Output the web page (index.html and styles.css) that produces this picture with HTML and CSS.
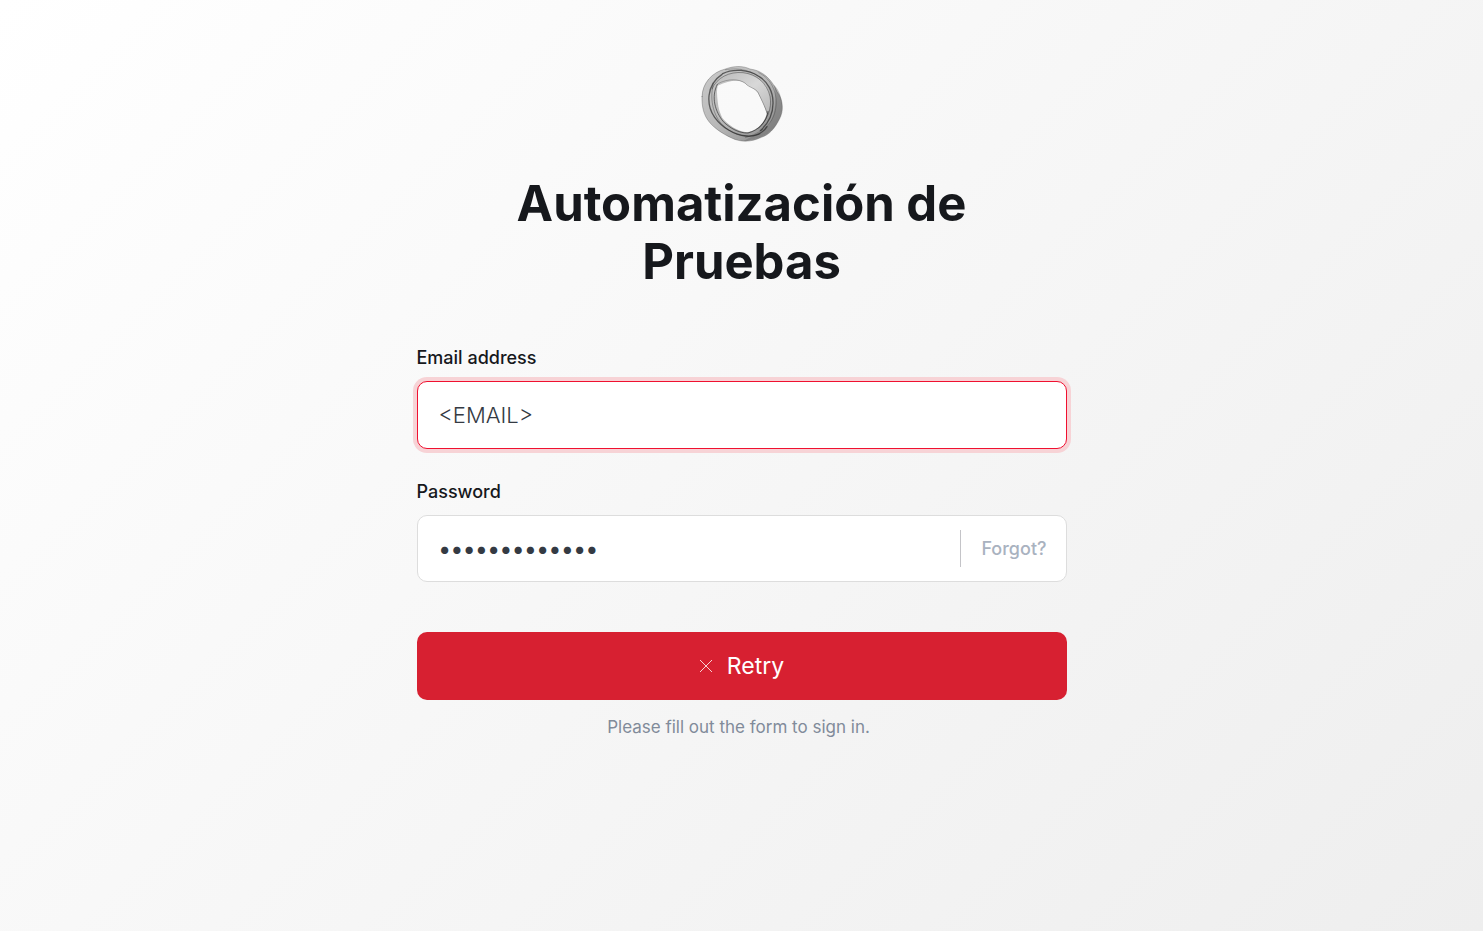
FILE: index.html
```html
<!DOCTYPE html>
<html lang="es">
<head>
<meta charset="utf-8">
<meta name="viewport" content="width=device-width, initial-scale=1">
<title>Automatización de Pruebas</title>
<link rel="stylesheet" href="styles.css">
</head>
<body>
<main class="login">
  <svg class="logo" viewBox="0 0 300 282" aria-hidden="true">
    <defs>
      <linearGradient id="smoke" x1="0" y1="0" x2="1" y2="1">
        <stop offset="0" stop-color="#cacaca"/>
        <stop offset=".5" stop-color="#b8b8b8"/>
        <stop offset="1" stop-color="#848484"/>
      </linearGradient>
      <linearGradient id="veil" x1="0" y1="0" x2="1" y2="1">
        <stop offset="0" stop-color="#bcbcbc"/>
        <stop offset=".5" stop-color="#d8d8d8"/>
        <stop offset="1" stop-color="#b8b8b8"/>
      </linearGradient>
    </defs>
    <path fill="url(#smoke)" fill-rule="evenodd" d="M30 119C31 78 60 46 100 36C130 25 155 27 174 36C212 40 241 69 255 104C274 128 276 162 262 187C248 215 231 234 208 241C177 256 145 256 119 243C91 230 66 213 51 194C35 174 29 149 30 119ZM77 86C73 105 76 119 77 133C79 154 84 169 91 183C107 203 137 224 165 226C190 222 216 202 224 171C218 145 206 126 198 109C190 95 179 94 165 84C151 68 121 65 77 86Z"/>
    <path fill="url(#veil)" d="M82 78C108 61 144 66 160 79C172 93 187 91 198 106C208 127 217 145 227 171C238 151 239 111 221 84C196 55 144 37 105 54Z"/>
    <path fill="#6c6c6c" fill-opacity=".45" d="M246 83C275 112 277 165 257 194C239 232 203 245 155 252C186 235 218 223 235 196C252 163 254 118 246 83Z"/>
    <g fill="none" stroke="#222" stroke-linecap="round">
      <path stroke-width="2" stroke-opacity=".4" d="M30 119C31 78 60 46 100 36C130 25 155 27 174 36C212 40 241 69 255 104C274 128 276 162 262 187C248 215 231 234 208 241C177 256 145 256 119 243C91 230 66 213 51 194C35 174 29 149 30 119Z"/>
      <path stroke-width="4" stroke-opacity=".65" d="M92 50C125 33 170 39 199 57C229 74 243 107 243 135C244 169 230 198 205 221"/>
      <path stroke-width="4" stroke-opacity=".65" d="M90 52C42 84 42 144 68 181C90 211 125 234 164 237C188 239 213 229 225 209"/>
      <path stroke-width="3" stroke-opacity=".6" d="M76 82C56 121 70 164 94 194C115 214 141 229 168 228C202 219 224 194 228 163"/>
      <path stroke-width="3" stroke-opacity=".4" d="M60 96C74 62 112 43 153 47C195 51 225 80 234 118C241 154 225 190 200 213"/>
      <path stroke-width="2" stroke-opacity=".5" d="M64 80C51 132 66 184 100 212C128 234 167 247 204 231"/>
      <path stroke-width="2" stroke-opacity=".4" d="M78 80C108 63 144 66 160 79C172 93 187 91 198 106C208 127 217 145 227 171"/>
      <path stroke-width="2" stroke-opacity=".4" d="M100 38C145 30 180 42 211 67M200 47C243 66 258 117 251 155C244 198 214 226 160 242"/>
    </g>
  </svg>
  <h1 class="title">Automatización de Pruebas</h1>
  <form class="form">
    <div class="field">
      <label class="label" for="email">Email address</label>
      <input class="input input-active" id="email" type="text" value="&lt;EMAIL&gt;">
    </div>
    <div class="field">
      <label class="label" for="password">Password</label>
      <div class="input-group">
        <input class="input-bare" id="password" type="password" value="contrasena123">
        <a class="forgot" href="#">Forgot?</a>
      </div>
    </div>
    <button class="submit" type="button">
      <svg class="cross" viewBox="0 0 14 14" aria-hidden="true"><path d="M1 1L13 13M13 1L1 13"/></svg>
      <span>Retry</span>
    </button>
    <p class="hint">Please fill out the form to sign in.</p>
  </form>
</main>
</body>
</html>
```
FILE: styles.css
```css
* {
  box-sizing: border-box;
}

body {
  margin: 0;
  min-height: 100vh;
  background: linear-gradient(135deg, #ffffff, #eeeeee);
  font-family: Inter, "Liberation Sans", sans-serif;
  color: #16181c;
}

.login {
  max-width: 650px;
  margin: 0 auto;
  padding: 57px 0;
  display: flex;
  flex-direction: column;
  align-items: center;
}

.logo {
  width: 100px;
  height: 94px;
}

.title {
  margin: 24px 0 55px;
  max-width: 520px;
  font-size: 49px;
  line-height: 58px;
  font-weight: 700;
  text-align: center;
}

.form {
  width: 100%;
}

.field {
  margin-bottom: 31px;
}

.label {
  display: block;
  margin-bottom: 11px;
  font-size: 18px;
  line-height: 24px;
  font-weight: 500;
}

.input,
.input-group {
  width: 100%;
  border: 1px solid #dddddd;
  border-radius: 10px;
  background: #ffffff;
}

.input,
.input-bare {
  padding: 0 21px;
  font-family: inherit;
  font-size: 22px;
  font-weight: 300;
  color: #343a43;
  outline: none;
}

.input {
  display: block;
  height: 68px;
}

.input-active {
  border-color: #f01030;
  box-shadow: 0 0 0 4px #f7d3d6;
}

.input-group {
  height: 67px;
  display: flex;
  align-items: center;
}

.input-bare {
  flex: 1;
  min-width: 0;
  height: 100%;
  border: 0;
  background: transparent;
  font-size: 23px;
  font-weight: 500;
}

.forgot {
  padding: 0 19px 0 20px;
  border-left: 1px solid #c4c4c8;
  font-size: 18px;
  line-height: 37px;
  font-weight: 500;
  color: #a9b2bf;
  text-decoration: none;
}

.submit {
  width: 100%;
  height: 68px;
  margin-top: 50px;
  display: flex;
  align-items: center;
  justify-content: center;
  gap: 14px;
  border: 0;
  border-radius: 10px;
  background: #d72031;
  font-family: inherit;
  font-size: 23px;
  color: #ffffff;
}

.cross {
  width: 14px;
  height: 14px;
  fill: none;
  stroke: #ffffff;
  stroke-opacity: .8;
}

.hint {
  margin: 15px 0 0;
  padding-right: 6px;
  font-size: 17px;
  line-height: 24px;
  text-align: center;
  color: #818b9a;
}
```
